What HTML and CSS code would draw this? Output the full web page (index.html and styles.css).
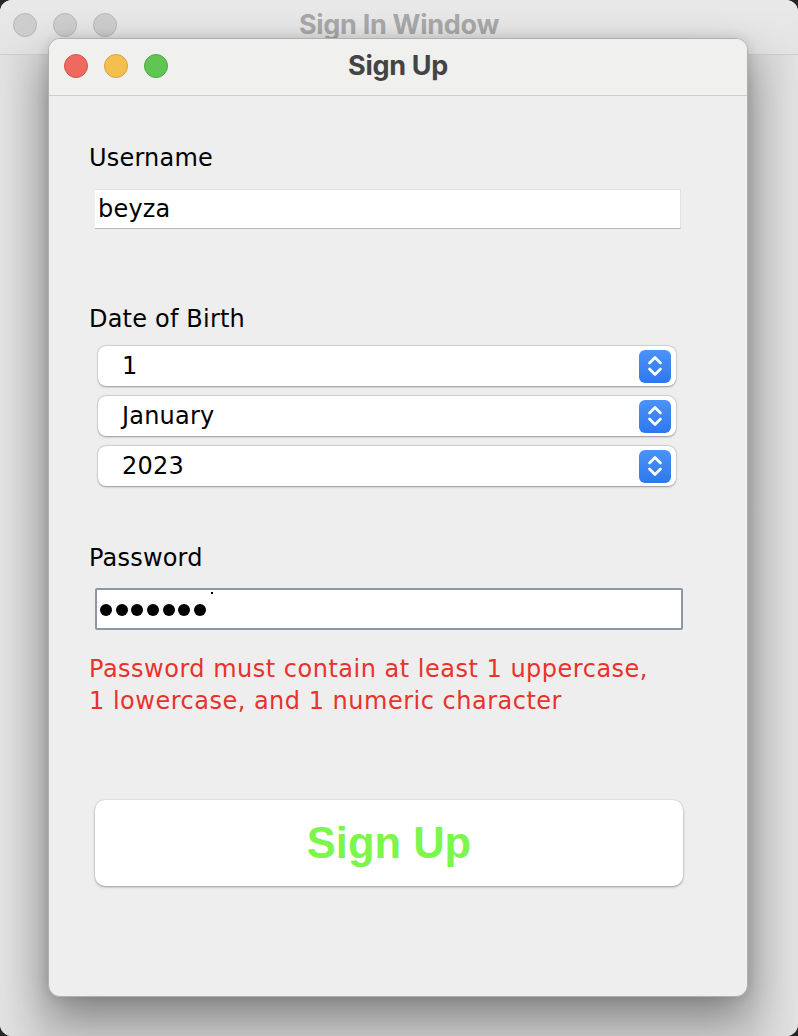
FILE: index.html
```html
<!DOCTYPE html>
<html>
<head>
<meta charset="utf-8">
<link rel="stylesheet" href="styles.css">
</head>
<body>
<div class="desktop">
  <div class="bg-titlebar">
    <div class="lights">
      <span class="light gray"></span>
      <span class="light gray"></span>
      <span class="light gray"></span>
    </div>
    <div class="bg-title">Sign In Window</div>
  </div>
  <div class="bg-body"></div>

  <div class="window">
    <div class="titlebar">
      <div class="lights front">
        <span class="light red"></span>
        <span class="light yellow"></span>
        <span class="light green"></span>
      </div>
      <div class="title">Sign Up</div>
    </div>
    <div class="content">
      <div class="label l-user">Username</div>
      <div class="textfield">beyza</div>

      <div class="label l-dob">Date of Birth</div>
      <div class="combos">
        <div class="combo"><span class="combo-text">1</span>
          <span class="stepper"><svg width="18" height="26" viewBox="0 0 18 26"><path d="M3.5 10 L9 4.5 L14.5 10" fill="none" stroke="#fff" stroke-width="2.6" stroke-linecap="round" stroke-linejoin="round"/><path d="M3.5 16 L9 21.5 L14.5 16" fill="none" stroke="#fff" stroke-width="2.6" stroke-linecap="round" stroke-linejoin="round"/></svg></span></div>
        <div class="combo"><span class="combo-text">January</span>
          <span class="stepper"><svg width="18" height="26" viewBox="0 0 18 26"><path d="M3.5 10 L9 4.5 L14.5 10" fill="none" stroke="#fff" stroke-width="2.6" stroke-linecap="round" stroke-linejoin="round"/><path d="M3.5 16 L9 21.5 L14.5 16" fill="none" stroke="#fff" stroke-width="2.6" stroke-linecap="round" stroke-linejoin="round"/></svg></span></div>
        <div class="combo"><span class="combo-text">2023</span>
          <span class="stepper"><svg width="18" height="26" viewBox="0 0 18 26"><path d="M3.5 10 L9 4.5 L14.5 10" fill="none" stroke="#fff" stroke-width="2.6" stroke-linecap="round" stroke-linejoin="round"/><path d="M3.5 16 L9 21.5 L14.5 16" fill="none" stroke="#fff" stroke-width="2.6" stroke-linecap="round" stroke-linejoin="round"/></svg></span></div>
      </div>

      <div class="label l-pass">Password</div>
      <div class="passfield">
        <span class="dot"></span><span class="dot"></span><span class="dot"></span><span class="dot"></span><span class="dot"></span><span class="dot"></span><span class="dot"></span>
        <span class="caret"></span>
      </div>

      <div class="error">Password must contain at least 1 uppercase,<br>1 lowercase, and 1 numeric character</div>

      <button class="signup">Sign Up</button>
    </div>
  </div>
</div>
</body>
</html>
```

FILE: styles.css
```css
html, body {
  margin: 0;
  padding: 0;
  background: #262626;
}
.desktop {
  position: relative;
  width: 798px;
  height: 1036px;
  overflow: hidden;
  border-radius: 12px;
  background: #e8e8e8;
  display: flex;
  flex-direction: column;
}
.bg-titlebar {
  position: relative;
  height: 54px;
  flex: none;
  background: linear-gradient(#e9e9e9, #e3e3e3);
  border-bottom: 1px solid #cdcdcd;
}
.bg-body {
  flex: 1;
  background: linear-gradient(90deg, #e2e2e2 0%, #d2d2d2 6%, #d2d2d2 94%, #e2e2e2 100%);
}
.lights {
  position: absolute;
  left: 13px;
  top: 13px;
  display: flex;
  gap: 16px;
}
.light {
  width: 24px;
  height: 24px;
  border-radius: 50%;
  box-sizing: border-box;
}
.light.gray { background: #cdcdcd; border: 1px solid #b8b8b8; }
.light.red { background: #ee6a5f; border: 1px solid #d85248; }
.light.yellow { background: #f5bf4f; border: 1px solid #d9a13a; }
.light.green { background: #61c554; border: 1px solid #4ea944; }
.bg-title {
  text-align: center;
  font-family: Inter, "Liberation Sans", sans-serif;
  font-weight: 700;
  font-size: 27px;
  letter-spacing: -0.3px;
  line-height: 50px;
  color: #a8a8a8;
}
.window {
  position: absolute;
  left: 48px;
  top: 38px;
  width: 700px;
  height: 959px;
  box-sizing: border-box;
  border-radius: 12px;
  border: 1px solid #b0b0b0;
  background: #eeeeee;
  overflow: hidden;
  box-shadow: 0 22px 45px rgba(0, 0, 0, 0.38), 0 0 12px rgba(0, 0, 0, 0.12);
  display: flex;
  flex-direction: column;
}
.titlebar {
  position: relative;
  height: 56px;
  flex: none;
  background: #f0f0ef;
  border-bottom: 1px solid #cfcfcf;
}
.lights.front {
  left: 15px;
  top: 15px;
}
.title {
  text-align: center;
  font-family: Inter, "Liberation Sans", sans-serif;
  font-weight: 700;
  font-size: 27px;
  letter-spacing: -0.3px;
  line-height: 54px;
  color: #444444;
}
.content {
  flex: 1;
  display: flex;
  flex-direction: column;
  font-family: "DejaVu Sans", sans-serif;
  font-size: 24px;
  letter-spacing: 0.2px;
  color: #000;
  padding-left: 40px;
}
.label {
  line-height: 28px;
}
.l-user { margin-top: 48px; }
.l-dob { margin-top: 76px; }
.l-pass { margin-top: 58px; }
.textfield {
  margin-top: 17px;
  margin-left: 6px;
  width: 586px;
  height: 40px;
  box-sizing: border-box;
  background: #fff;
  border-top: 1px solid #e2e2e2;
  border-bottom: 1px solid #b9b9b9;
  border-right: 1px solid #e2e2e2;
  line-height: 38px;
  padding-left: 3px;
}
.combos {
  margin-top: 13px;
  margin-left: 9px;
  display: flex;
  flex-direction: column;
  gap: 10px;
}
.combo {
  width: 578px;
  height: 40px;
  box-sizing: border-box;
  background: #fff;
  border-radius: 8px;
  box-shadow: 0 0.5px 2px rgba(0, 0, 0, 0.35), 0 0 0 0.5px rgba(0, 0, 0, 0.08);
  display: flex;
  align-items: center;
  justify-content: space-between;
  padding-left: 24px;
  padding-right: 5px;
}
.combo-text {
  line-height: 40px;
}
.stepper {
  width: 32px;
  height: 33px;
  border-radius: 6px;
  background: linear-gradient(#4b93f8, #2d78ef);
  display: flex;
  align-items: center;
  justify-content: center;
}
.passfield {
  position: relative;
  margin-top: 16px;
  margin-left: 6px;
  width: 588px;
  height: 42px;
  box-sizing: border-box;
  background: #fff;
  border: 2px solid #8e98a4;
  border-radius: 2px;
  display: flex;
  align-items: center;
  padding-left: 3px;
  gap: 3.7px;
}
.dot {
  width: 12px;
  height: 12px;
  border-radius: 50%;
  background: #000;
  margin-top: 2px;
}
.caret {
  position: absolute;
  left: 114px;
  top: 2px;
  width: 2px;
  height: 2px;
  background: #000;
}
.error {
  margin-top: 23px;
  line-height: 32px;
  letter-spacing: 0.5px;
  color: #e8322b;
}
.signup {
  margin-top: 83px;
  margin-left: 6px;
  width: 588px;
  height: 86px;
  border: none;
  border-radius: 10px;
  background: #fff;
  box-shadow: 0 1px 2.5px rgba(0, 0, 0, 0.35), 0 0 0 0.5px rgba(0, 0, 0, 0.06);
  font-family: "Liberation Sans", Arial, sans-serif;
  font-weight: 700;
  font-size: 43.5px;
  color: #7cf64b;
  padding: 0;
  cursor: pointer;
}
```
